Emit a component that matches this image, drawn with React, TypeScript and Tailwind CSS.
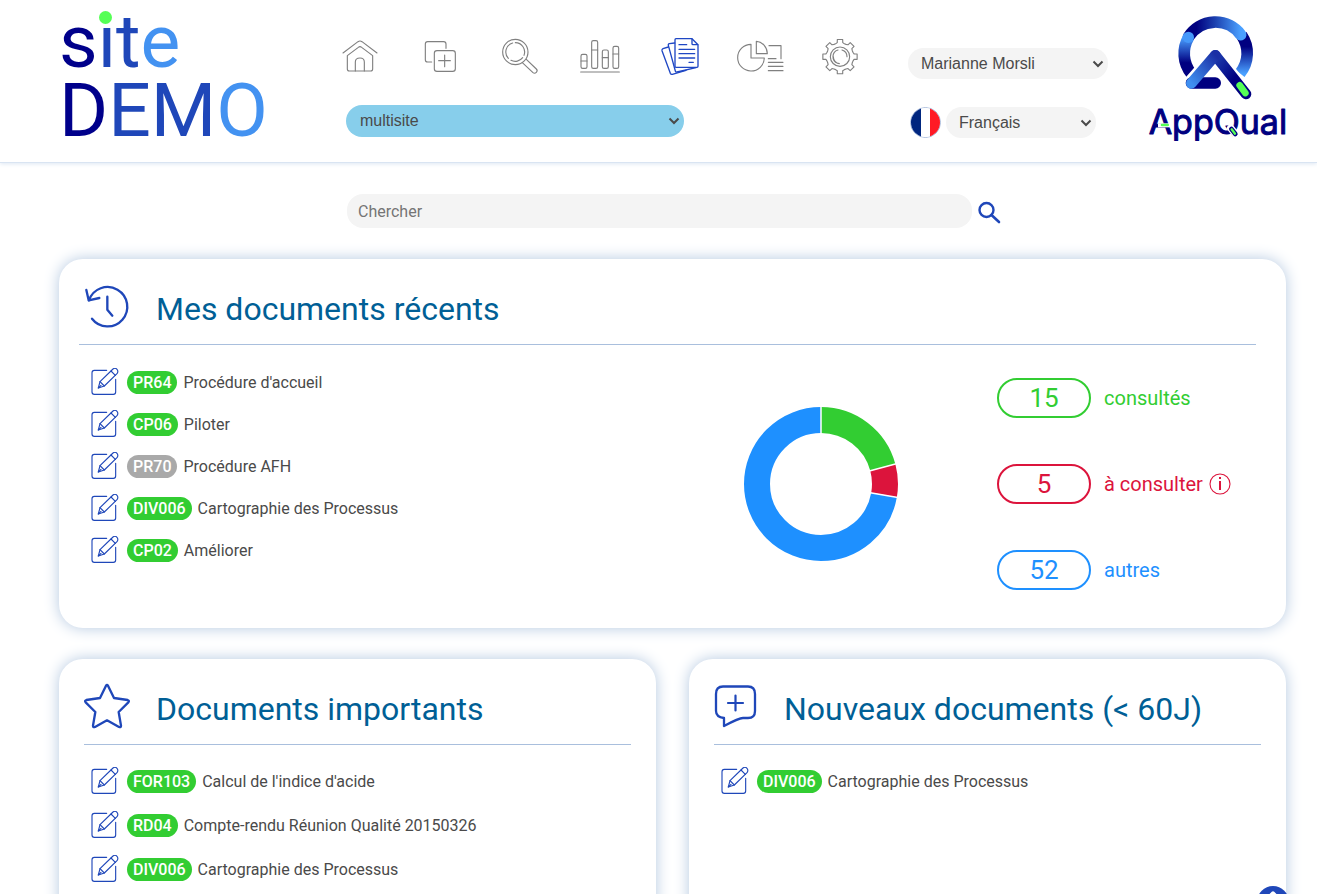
import React from "react";

interface IconProps {
  children: React.ReactNode;
  viewBox: string;
  className: string;
}

const Icon: React.FC<IconProps> = ({ children, viewBox, className }) => {
  return (
    <svg
      viewBox={viewBox}
      className={className}
      fill="none"
      stroke="currentColor"
      strokeWidth="3.4"
      strokeLinecap="round"
      strokeLinejoin="round"
      aria-hidden="true"
    >
      {children}
    </svg>
  );
};

// eight teeth around (840, 95)
const gearPoints = Array.from({ length: 8 })
  .flatMap((_, i) =>
    [
      [-19, 41],
      [-11, 43],
      [-9, 52],
      [9, 52],
      [11, 43],
      [19, 41],
    ].map(([offset, r]) => {
      const a = ((i * 45 + offset) * Math.PI) / 180;
      return `${(840 + r * Math.cos(a)).toFixed(1)},${(95 + r * Math.sin(a)).toFixed(1)}`;
    })
  )
  .join(" ");

const navItems = [
  {
    label: "Accueil",
    viewBox: "30 33 120 120",
    drawing: (
      <>
        <path d="M39 84L84 50Q90 46 96 50L141 84" />
        <path d="M52 92L85 67Q90 63 95 67L128 92V132Q128 138 122 138H58Q52 138 52 132Z" />
        <path d="M76 138V111Q76 99 90 99Q103 99 103 111V138" />
      </>
    ),
  },
  {
    label: "Créer",
    viewBox: "270 33 120 120",
    drawing: (
      <>
        <path d="M348 70V57Q348 50 341 50H293Q286 50 286 57V104Q286 111 293 111H305" />
        <rect x="313" y="77" width="63" height="62" rx="8" />
        <path d="M344 90V125M326 107H361" />
      </>
    ),
  },
  {
    label: "Rechercher",
    viewBox: "510 33 120 120",
    drawing: (
      <>
        <circle cx="556" cy="81" r="38" />
        <path d="M548 54A28 28 0 0 0 535 100M543 106A28 28 0 0 0 578 98M582 91A28 28 0 0 0 556 53" />
        <path d="M577 113L609 143Q614 147 619 142Q624 137 619 132L589 103" />
      </>
    ),
  },
  {
    label: "Indicateurs",
    viewBox: "60 33 120 120",
    drawing: (
      <>
        <rect x="63" y="88" width="18" height="42" rx="5" />
        <rect x="95" y="47" width="18" height="83" rx="5" />
        <rect x="127" y="75" width="18" height="55" rx="5" />
        <rect x="159" y="64" width="17" height="66" rx="5" />
        <path d="M63 108H81M95 75H113M127 98H145M159 87H176M62 141H178" />
      </>
    ),
  },
  {
    label: "Documents",
    viewBox: "300 33 120 120",
    active: true,
    drawing: (
      <g strokeWidth="4">
        <path d="M348 41H396L414 59V124Q414 127 411 127H348Q345 127 345 124V44Q345 41 348 41Z" />
        <path d="M396 42V56Q396 59 399 59H413" />
        <path d="M357 59H380M357 73H404M357 86H404M357 99H404M387 112H400" />
        <path d="M344 54L328 56Q324 57 325 61L346 138Q347 142 351 141L408 128" />
        <path d="M325 66L309 71Q305 73 306 77L331 145Q333 149 337 148L378 136" />
      </g>
    ),
  },
  {
    label: "Rapports",
    viewBox: "528 33 144 120",
    wide: true,
    drawing: (
      <>
        <path d="M573 58V99H613A40 40 0 1 1 573 58Z" />
        <path d="M589 49V86H622A35 38 0 0 0 589 49Z" />
        <path d="M627 62H663V101M625 101H648M625 112H669M625 124H669M625 137H669" />
      </>
    ),
  },
  {
    label: "Paramètres",
    viewBox: "780 33 120 120",
    drawing: (
      <>
        <polygon points={gearPoints} />
        <circle cx="840" cy="95" r="29" />
        <path d="M834 75A21 21 0 0 0 833 115M820 95A21 21 0 0 0 838 116M846 75A21 21 0 0 1 861 95" />
      </>
    ),
  },
];

const SiteLogo = () => {
  return (
    <a
      href="#"
      className="relative block pt-[7px] pl-[59px] text-[75px] leading-[69px] text-[#1f47b9]"
    >
      <span className="block">
        <span className="text-[#00008b]">s</span>it
        <span className="text-[#4392f1]">e</span>
      </span>
      <span className="block">
        <span className="text-[#00008b]">D</span>EM
        <span className="text-[#4392f1]">O</span>
      </span>
      <span className="absolute top-[11px] left-[99px] size-[13px] rounded-full bg-[#55ff55]" />
    </a>
  );
};

const AppQualLogo = () => {
  return (
    <svg
      viewBox="54 42 414 390"
      className="h-[130px] w-[138px] shrink-0"
      role="img"
      aria-label="AppQual"
      fill="none"
    >
      <defs>
        <linearGradient id="left" x1="0" y1="1" x2="0" y2="0">
          <stop offset="0.3" stopColor="#000080" />
          <stop offset="1" stopColor="#4aa0ff" />
        </linearGradient>
        <linearGradient id="top" x1="0" y1="0" x2="1" y2="0">
          <stop offset="0.15" stopColor="#000080" />
          <stop offset="0.5" stopColor="#1b3fae" />
          <stop offset="1" stopColor="#4aa0ff" />
        </linearGradient>
        <linearGradient id="right" x1="0" y1="0" x2="0" y2="1">
          <stop offset="0.3" stopColor="#000080" />
          <stop offset="1" stopColor="#4aa0ff" />
        </linearGradient>
        <linearGradient id="leg" x1="0" y1="1" x2="1" y2="0">
          <stop offset="0" stopColor="#3f8ff0" />
          <stop offset="1" stopColor="#1b2fa5" />
        </linearGradient>
        <linearGradient id="legRight" x1="0" y1="0" x2="1" y2="1">
          <stop offset="0" stopColor="#1f3fb0" />
          <stop offset="0.6" stopColor="#000080" />
        </linearGradient>
      </defs>
      <path d="M335 106A95 95 0 0 1 330 220" stroke="url(#right)" strokeWidth="35" />
      <path d="M176 110A95 95 0 0 1 332 104" stroke="url(#top)" strokeWidth="35" strokeLinecap="round" />
      <path d="M184 221A95 95 0 0 1 176 112" stroke="url(#left)" strokeWidth="35" />
      <circle cx="175" cy="112" r="17" fill="#4598fa" />
      <path d="M256 166L182 250M256 166L349 283" stroke="#fff" strokeWidth="46" strokeLinecap="round" />
      <path d="M184 249H256" stroke="#000080" strokeWidth="34" strokeLinecap="round" />
      <path d="M256 166L348 282" stroke="url(#legRight)" strokeWidth="32" strokeLinecap="round" />
      <path d="M256 166L184 250" stroke="url(#leg)" strokeWidth="32" strokeLinecap="round" />
      <path d="M329 256L346 279" stroke="#55ff55" strokeWidth="20" strokeLinecap="round" />
      <text
        x="56"
        y="402"
        fontSize="102"
        stroke="#000080"
        strokeWidth="3"
        strokeLinejoin="round"
        className="fill-[#000080] font-[Inter] font-normal"
      >
        AppQual
      </text>
      <path d="M84 376H122" stroke="#fff" strokeWidth="12" />
      <path d="M96 375H113" stroke="#55ff55" strokeWidth="8" strokeLinecap="round" />
      <path d="M302 384L318 404" stroke="#fff" strokeWidth="22" strokeLinecap="round" />
      <path d="M304 387L316 402" stroke="#000080" strokeWidth="14" strokeLinecap="round" />
      <path d="M305 388L315 401" stroke="#55ff55" strokeWidth="7" strokeLinecap="round" />
    </svg>
  );
};

interface SelectProps {
  label: string;
  value: string;
  className: string;
}

const Select: React.FC<SelectProps> = ({ label, value, className }) => {
  return (
    <div className="relative w-fit text-[#4a4a4a]">
      <select aria-label={label} className={className}>
        <option>{value}</option>
      </select>
      <Icon
        viewBox="0 0 12 8"
        className="pointer-events-none absolute top-1/2 right-1 h-2 w-3 -translate-y-1/2"
      >
        <path d="M1.5 1.5L6 6L10.500 1.5" strokeWidth="2" strokeLinecap="butt" strokeLinejoin="miter" />
      </Icon>
    </div>
  );
};

const Header = () => {
  return (
    <header className="flex h-[163px] items-start border-b border-[#d9e4f2] pr-[31px] shadow-[0_1px_4px_#dde7f3]">
      <div className="w-80 shrink-0">
        <SiteLogo />
      </div>
      <div className="w-[560px] shrink-0 pt-9">
        <nav className="flex">
          {navItems.map((item) => (
            <a
              key={item.label}
              href="#"
              aria-label={item.label}
              className={
                item.active
                  ? "flex w-20 justify-center text-[#1f47c4]"
                  : "flex w-20 justify-center text-[#808080]"
              }
            >
              <Icon viewBox={item.viewBox} className={item.wide ? "h-10 w-12" : "size-10"}>
                {item.drawing}
              </Icon>
            </a>
          ))}
        </nav>
        <div className="mt-[29px] ml-[26px]">
          <Select
            label="Site"
            value="multisite"
            className="block h-8 w-[338px] appearance-none rounded-2xl bg-[#87ceeb] pl-3.5 font-['Liberation_Sans',sans-serif] text-base"
          />
        </div>
      </div>
      <div className="pt-12 pl-7">
        <Select
          label="Utilisateur"
          value="Marianne Morsli"
          className="block h-[31px] w-[200px] appearance-none rounded-2xl bg-[#f4f4f4] pl-[13px] font-['Liberation_Sans',sans-serif] text-base"
        />
        <div className="mt-7 flex items-center gap-[5px] pl-0.5">
          <span className="flex size-[31px] overflow-hidden rounded-full border border-[#a9bcdc]">
            <span className="flex-1 bg-[#00267f]" />
            <span className="flex-1 bg-white" />
            <span className="flex-1 bg-[#ff1a25]" />
          </span>
          <Select
            label="Langue"
            value="Français"
            className="block h-[31px] w-[150px] appearance-none rounded-2xl bg-[#f4f4f4] pl-[13px] font-['Liberation_Sans',sans-serif] text-base"
          />
        </div>
      </div>
      <a href="#" className="mt-3.5 ml-auto">
        <AppQualLogo />
      </a>
    </header>
  );
};

interface Doc {
  code: string;
  title: string;
  archived?: boolean;
}

const recentDocs: Doc[] = [
  { code: "PR64", title: "Procédure d'accueil" },
  { code: "CP06", title: "Piloter" },
  { code: "PR70", title: "Procédure AFH", archived: true },
  { code: "DIV006", title: "Cartographie des Processus" },
  { code: "CP02", title: "Améliorer" },
];

const importantDocs: Doc[] = [
  { code: "FOR103", title: "Calcul de l'indice d'acide" },
  { code: "RD04", title: "Compte-rendu Réunion Qualité 20150326" },
  { code: "DIV006", title: "Cartographie des Processus" },
];

const newDocs: Doc[] = [{ code: "DIV006", title: "Cartographie des Processus" }];

const DocRow: React.FC<{ doc: Doc; className: string }> = ({ doc, className }) => {
  return (
    <li className={className}>
      <button type="button" aria-label={`Modifier ${doc.code}`}>
        <Icon viewBox="123 353 84 84" className="size-7 text-[#1f47b9]">
          <path d="M170 360H133Q126 360 126 367V425Q126 432 133 432H190Q197 432 197 425V387" />
          <path d="M145 413L150 394L189 356Q196 351 201 357Q206 363 201 370L163 407Z" />
          <path d="M150 394L163 407M183 362L196 375M145 413L153 405" />
        </Icon>
      </button>
      <span
        className={
          doc.archived
            ? "ml-2 rounded-full bg-[#a9a9a9] px-1.5 text-base leading-[23px] font-medium text-white"
            : "ml-2 rounded-full bg-[#32cd32] px-1.5 text-base leading-[23px] font-medium text-white"
        }
      >
        {doc.code}
      </span>
      <a href="#" className="ml-1.5 pt-0.5 text-base text-[#4a4a4a]">
        {doc.title}
      </a>
    </li>
  );
};

interface CardProps {
  title: string;
  icon: React.ReactNode;
  headClass: string;
  children: React.ReactNode;
}

const Card: React.FC<CardProps> = ({ title, icon, headClass, children }) => {
  return (
    <section className="rounded-3xl bg-white pt-6 shadow-[0_0_15px_#b4c8e0]">
      <div className={headClass}>
        {icon}
        <h2 className="pt-1.5 text-[32px] leading-10 text-[#005f96]">{title}</h2>
      </div>
      {children}
    </section>
  );
};

const Donut = () => {
  return (
    <svg
      viewBox="-77 -77 154 154"
      className="size-[154px] shrink-0"
      role="img"
      aria-label="Répartition des documents"
    >
      <g fill="none" strokeWidth="26" transform="rotate(-90)">
        <circle r="64" stroke="#32cd32" pathLength="72" strokeDasharray="15 57" />
        <circle r="64" stroke="#dc143c" pathLength="72" strokeDasharray="5 67" strokeDashoffset="-15" />
        <circle r="64" stroke="#1e90ff" pathLength="72" strokeDasharray="52 20" strokeDashoffset="-20" />
      </g>
      <g stroke="#fff" strokeWidth="1.5">
        <path d="M0 -50V-78" />
        <path d="M0 -50V-78" transform="rotate(75)" />
        <path d="M0 -50V-78" transform="rotate(100)" />
      </g>
    </svg>
  );
};

const stats = [
  { value: 15, label: "consultés", color: "text-[#32cd32]" },
  { value: 5, label: "à consulter", color: "text-[#dc143c]", info: true },
  { value: 52, label: "autres", color: "text-[#1e90ff]" },
];

const App = () => {
  return (
    <div className="min-h-screen overflow-hidden bg-white font-[Roboto,sans-serif]">
      <Header />
      <main className="pr-[31px] pb-8 pl-[59px]">
        <form className="mt-[31px] flex items-center justify-center gap-1 pl-1">
          <input
            type="text"
            aria-label="Chercher"
            placeholder="Chercher"
            className="h-[34px] w-[625px] rounded-2xl bg-[#f4f4f4] px-[11px] text-base placeholder:text-[#757575]"
          />
          <button type="button" aria-label="Lancer la recherche">
            <Icon viewBox="0 0 26 26" className="mt-1 size-[26px] text-[#1f47b9]">
              <circle cx="10.5" cy="10" r="7" strokeWidth="2.4" />
              <path d="M15.5 15L23 22" strokeWidth="2.6" />
            </Icon>
          </button>
        </form>

        <div className="mt-[31px] flex flex-col gap-[31px]">
          <Card
            title="Mes documents récents"
            headClass="ml-5 mr-[30px] flex h-[62px] items-start gap-[26px] border-b border-[#a9bfdd] pl-[5px]"
            icon={
              <Icon viewBox="103 100 138 138" className="size-[46px] text-[#1f47b9]">
                <g strokeWidth="7">
                  <path d="M127 207A59 59 0 1 0 118 152" />
                  <path d="M110 121L117 152L149 145" />
                  <path d="M173 141V180L188 198" />
                </g>
              </Icon>
            }
          >
            <div className="flex items-center pr-[30px] pb-[38px]">
              <ul className="flex-1 self-start pt-4 pl-8">
                {recentDocs.map((doc) => (
                  <DocRow key={doc.code} doc={doc} className="flex h-[42px] items-center" />
                ))}
              </ul>
              <div className="flex items-center gap-[99px] pt-[33px]">
                <Donut />
                <ul className="flex w-[259px] flex-col gap-[46px]">
                  {stats.map((stat) => (
                    <li key={stat.label} className={stat.color}>
                      <a href="#" className="flex items-center">
                        <span className="h-10 w-[94px] rounded-full border-2 border-current text-center text-[26px] leading-9">
                          {stat.value}
                        </span>
                        <span className="ml-[13px] text-xl">{stat.label}</span>
                        {stat.info && (
                          <Icon viewBox="0 0 22 22" className="ml-1.5 size-[22px]">
                            <circle cx="11" cy="11" r="10" strokeWidth="1.1" />
                            <path d="M11 4V6M11 8V17" strokeWidth="2" strokeLinecap="butt" />
                          </Icon>
                        )}
                      </a>
                    </li>
                  ))}
                </ul>
              </div>
            </div>
          </Card>

          <div className="grid grid-cols-2 gap-[33px]">
            <Card
              title="Documents importants"
              headClass="mx-[25px] flex h-[62px] items-start gap-[26px] border-b border-[#a9bfdd]"
              icon={
                <Icon viewBox="102 129 138 138" className="size-[46px] text-[#1f47b9]">
                  <path
                    d="M168 137Q171 133 174 137L192 174L233 180Q239 182 235 187L206 216L213 257Q213 263 207 261L171 241L135 261Q129 263 129 257L136 216L107 187Q103 182 109 180L150 174Z"
                    strokeWidth="7"
                  />
                </Icon>
              }
            >
              <ul className="pt-3.5 pb-8 pl-8">
                {importantDocs.map((doc) => (
                  <DocRow key={doc.code} doc={doc} className="flex h-11 items-center" />
                ))}
              </ul>
            </Card>
            <Card
              title="Nouveaux documents (< 60J)"
              headClass="mx-[25px] flex h-[62px] items-start gap-6 border-b border-[#a9bfdd]"
              icon={
                <Icon viewBox="2 0 46 46" className="size-[46px] text-[#1f47b9]">
                  <path
                    d="M11 3.5H36Q43 3.5 43 11V28Q43 35 36 35H31Q27 35 12 43V35Q4 34 4 28V11Q4 3.5 11 3.5Z"
                    strokeWidth="2.3"
                  />
                  <path d="M23.5 12.5V27.5M16 20H31" strokeWidth="2.2" />
                </Icon>
              }
            >
              <ul className="pt-3.5 pb-8 pl-8">
                {newDocs.map((doc) => (
                  <DocRow key={doc.code} doc={doc} className="flex h-11 items-center" />
                ))}
              </ul>
            </Card>
          </div>
        </div>
      </main>
      <button
        type="button"
        aria-label="Haut de page"
        className="fixed right-7 -bottom-6 flex size-8 items-start justify-center rounded-full bg-[#1f47b9] pt-1 text-white"
      >
        <Icon viewBox="0 0 24 24" className="size-6">
          <path d="M12 21V3M5 10L12 3L19 10" />
        </Icon>
      </button>
    </div>
  );
};

export default App;
